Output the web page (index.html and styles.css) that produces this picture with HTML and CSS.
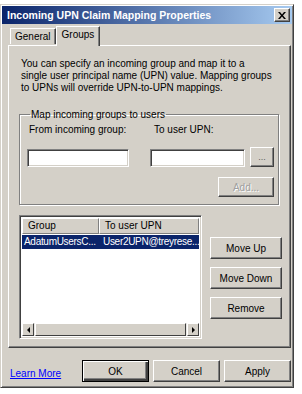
FILE: index.html
```html
<!DOCTYPE html>
<html lang="en">
<head>
  <meta charset="UTF-8">
  <title>Incoming UPN Claim Mapping Properties</title>
  <link rel="stylesheet" href="styles.css">
</head>
<body>
  <div class="window">
    <div class="titlebar">
      <span class="title">Incoming UPN Claim Mapping Properties</span>
      <span class="close">
        <svg width="8" height="7" viewBox="0 0 8 7"><path d="M0 0h2l2 2.5 2-2.5h2l-3 3.5 3 3.5h-2l-2-2.5-2 2.5h-2l3-3.5z" fill="#000"/></svg>
      </span>
    </div>

    <div class="tabs">
      <div class="tab">General</div>
      <div class="tab active">Groups</div>
    </div>

    <div class="panel">
      <p class="intro">You can specify an incoming group and map it to a<br>single user principal name (UPN) value. Mapping groups<br>to UPNs will override UPN-to-UPN mappings.</p>

      <fieldset class="groupbox">
        <legend>Map incoming groups to users</legend>
        <div class="map-grid">
          <span class="label">From incoming group:</span>
          <span class="label to">To user UPN:</span>
          <span></span>
          <span class="input first"></span>
          <span class="input second"></span>
          <button class="btn small">...</button>
          <button class="btn add" disabled>Add...</button>
        </div>
      </fieldset>

      <div class="list-row">
        <div class="list">
          <div class="list-head">
            <div class="col group">Group</div>
            <div class="col upn">To user UPN</div>
          </div>
          <div class="list-item selected">
            <div class="col group">AdatumUsersC...</div>
            <div class="col upn">User2UPN@treyrese...</div>
          </div>
          <div class="list-fill"></div>
          <div class="hscroll">
            <span class="arrow left"></span>
            <span class="thumb"></span>
            <span class="arrow right"></span>
          </div>
        </div>
        <div class="side-buttons">
          <button class="btn">Move Up</button>
          <button class="btn">Move Down</button>
          <button class="btn">Remove</button>
        </div>
      </div>
    </div>

    <div class="footer">
      <a href="#" class="learn">Learn More</a>
      <button class="btn default">OK</button>
      <button class="btn">Cancel</button>
      <button class="btn">Apply</button>
    </div>
  </div>
</body>
</html>
```

FILE: styles.css
```css
* {
  box-sizing: border-box;
}
body {
  margin: 0;
  background: #fff;
  font-family: "Liberation Sans", Arial, sans-serif;
  font-size: 10px;
  color: #000;
}
.window {
  width: 294px;
  height: 384px;
  margin-top: 4px;
  background: #d4d0c8;
  border: 1px solid;
  border-color: #d4d0c8 #404040 #404040 #d4d0c8;
  box-shadow: inset 1px 1px #fff, inset -1px -1px #808080;
  display: flex;
  flex-direction: column;
}
.titlebar {
  height: 18px;
  margin: 1px 1px 0 1px;
  background: linear-gradient(to right, #0a246a, #a6caf0);
  display: flex;
  align-items: center;
  justify-content: space-between;
  padding: 0 2px 0 5px;
}
.title {
  color: #fff;
  font-weight: bold;
  font-size: 10.5px;
}
.close {
  width: 16px;
  height: 14px;
  background: #d4d0c8;
  border: 1px solid;
  border-color: #fff #404040 #404040 #fff;
  box-shadow: inset -1px -1px #808080;
  display: flex;
  align-items: center;
  justify-content: center;
}
.tabs {
  display: flex;
  align-items: flex-end;
  height: 19px;
  margin: 2px 0 0 7px;
  position: relative;
  z-index: 1;
}
.tab {
  height: 16px;
  padding: 0 4px;
  border: 1px solid;
  border-bottom: none;
  border-color: #fff #404040 #404040 #fff;
  box-shadow: inset -1px 0 #808080;
  line-height: 15px;
  margin-left: 2px;
  margin-bottom: 1px;
}
.tab.active {
  height: 20px;
  line-height: 16px;
  margin-left: 0;
  margin-bottom: -1px;
  padding: 0 5px;
  background: #d4d0c8;
}
.panel {
  height: 303px;
  margin: 0 2px 0 7px;
  border: 1px solid;
  border-color: #fff #404040 #404040 #fff;
  box-shadow: inset -1px -1px #808080;
  padding: 12px 11px 0 10px;
}
.intro {
  margin: 0 0 0 2px;
  line-height: 12px;
}
.groupbox {
  margin: 15px 0 0 0;
  padding: 0 5px 0 7px;
  border: 1px solid #808080;
  box-shadow: 1px 1px #fff, inset 1px 1px #fff;
  height: 96px;
  min-width: 0;
}
.groupbox legend {
  padding: 0 1px;
  margin-left: 3px;
}
.map-grid {
  display: grid;
  grid-template-columns: 123px 100px 24px;
  grid-template-rows: 22px 21px 30px;
  align-items: end;
  padding-top: 4px;
}
.label {
  padding-left: 2px;
  align-self: start;
  white-space: nowrap;
}
.label.to {
  padding-left: 4px;
}
.input {
  height: 18px;
  background: #fff;
  border: 1px solid;
  border-color: #808080 #fff #fff #808080;
  box-shadow: inset 1px 1px #404040, inset -1px -1px #d4d0c8;
}
.input.first {
  width: 102px;
}
.input.second {
  width: 95px;
}
.btn {
  font-family: inherit;
  font-size: 10px;
  height: 22px;
  padding: 0;
  background: #d4d0c8;
  color: #000;
  border: 1px solid;
  border-color: #fff #404040 #404040 #fff;
  box-shadow: inset -1px -1px #808080;
  border-radius: 0;
}
.btn:disabled {
  color: #a0a0a0;
  text-shadow: 1px 1px #fff;
}
.map-grid .btn.small {
  width: 24px;
  height: 20px;
  font-size: 9px;
  color: #606060;
}
.btn.add {
  grid-column: 2 / 4;
  justify-self: end;
  width: 56px;
  height: 20px;
}
.list-row {
  display: flex;
  margin-top: 10px;
}
.list {
  width: 183px;
  height: 124px;
  background: #fff;
  border: 1px solid;
  border-color: #808080 #fff #fff #808080;
  box-shadow: inset 1px 1px #404040, inset -1px -1px #d4d0c8;
  padding: 2px;
  display: flex;
  flex-direction: column;
}
.list-head {
  display: flex;
  height: 16px;
  background: #d4d0c8;
  flex: none;
}
.list-head .col {
  border: 1px solid;
  border-color: #fff #808080 #808080 #fff;
  line-height: 14px;
  padding-left: 5px;
}
.col.group {
  width: 77px;
  flex: none;
  white-space: nowrap;
  overflow: hidden;
}
.col.upn {
  flex: 1;
  white-space: nowrap;
  overflow: hidden;
}
.list-item {
  display: flex;
  height: 14px;
  line-height: 14px;
  margin-top: 1px;
  flex: none;
  letter-spacing: -0.3px;
}
.list-item .col {
  padding-left: 2px;
}
.list-item .col.upn {
  padding-left: 4px;
}
.list-item.selected {
  background: #0a246a;
  color: #fff;
}
.list-fill {
  flex: 1;
}
.hscroll {
  display: flex;
  height: 13px;
  background: #eae8e4;
  gap: 1px;
  flex: none;
}
.arrow, .thumb {
  background: #d4d0c8;
  border: 1px solid;
  border-color: #fff #404040 #404040 #fff;
  display: flex;
  align-items: center;
  justify-content: center;
}
.arrow {
  width: 12px;
}
.thumb {
  flex: 1;
}
.arrow::after {
  content: "";
  border: 3px solid transparent;
}
.arrow.left::after {
  border-right-color: #000;
  border-left-width: 0;
}
.arrow.right::after {
  border-left-color: #000;
  border-right-width: 0;
}
.side-buttons {
  display: flex;
  flex-direction: column;
  gap: 8px;
  margin: 22px 0 0 8px;
}
.side-buttons .btn {
  width: 72px;
  height: 22px;
}
.footer {
  display: flex;
  align-items: center;
  height: 22px;
  margin-top: 12px;
  padding: 0 2px 0 9px;
  gap: 4px;
}
.learn {
  color: #0000ff;
  text-decoration: underline;
  margin-right: auto;
  padding-top: 5px;
}
.footer .btn {
  width: 67px;
  height: 22px;
}
.btn.default {
  border: 1px solid #000;
  box-shadow: inset 1px 1px #fff, inset -2px -2px #404040, inset -3px -3px #808080;
}
```
